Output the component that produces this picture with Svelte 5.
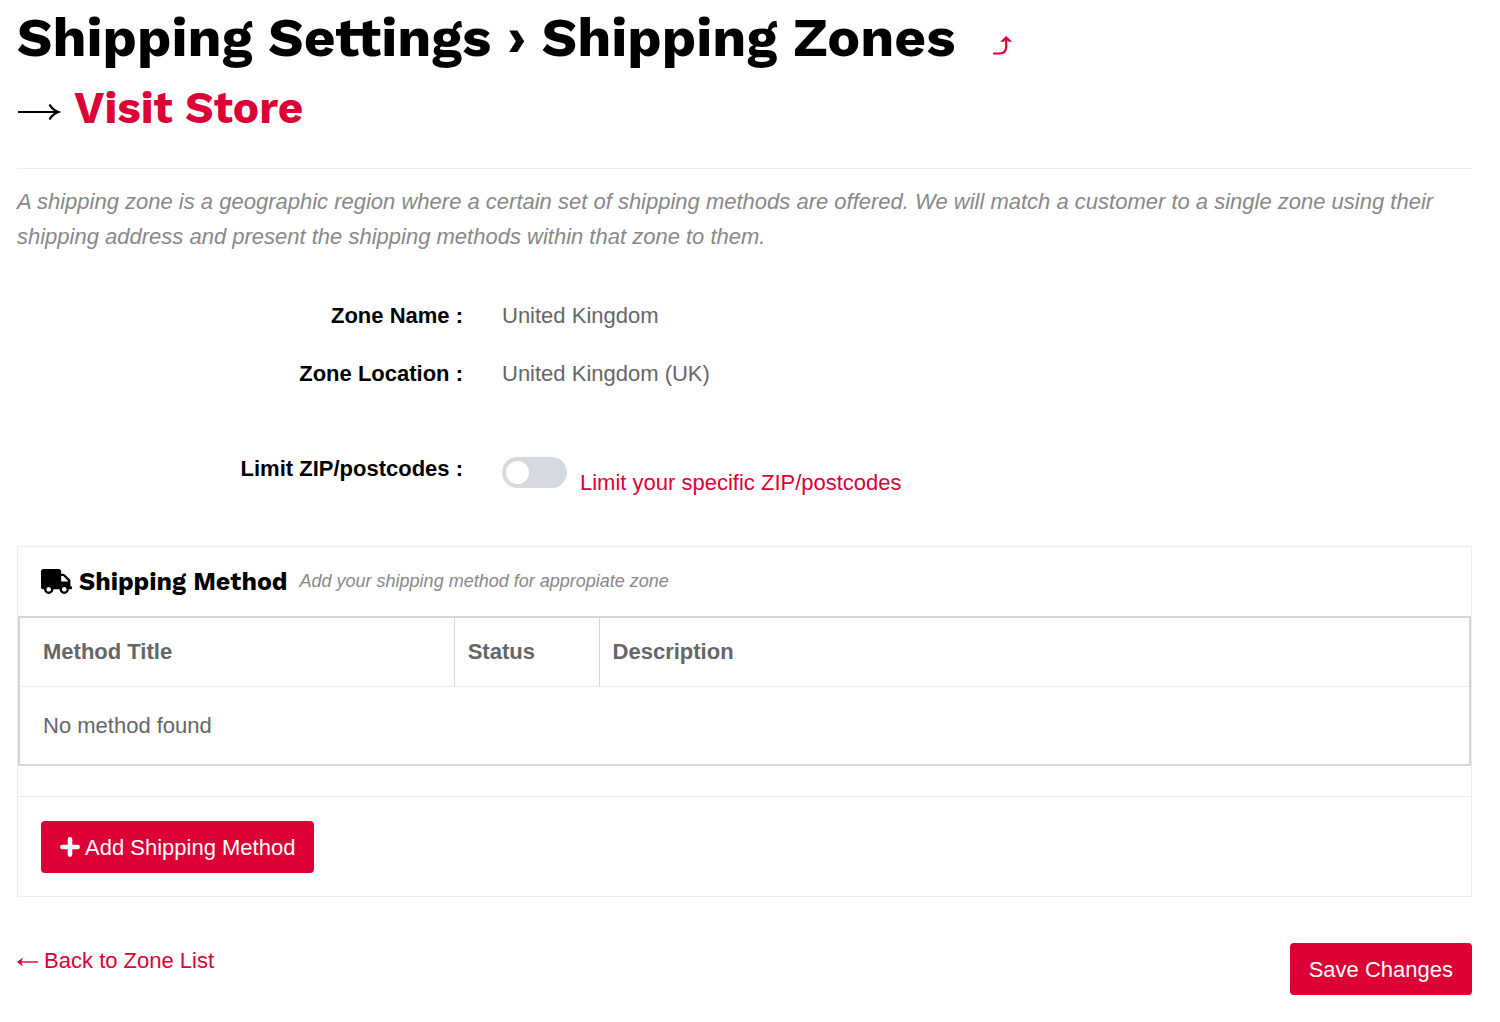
<script>
  let limitPostcodes = $state(false);

  const zone = {
    name: 'United Kingdom',
    location: 'United Kingdom (UK)'
  };

  let methods = $state([]);
</script>

<main class="shipping-zone">
  <header class="page-header">
    <h1>
      Shipping Settings › Shipping Zones
      <a href="#admin" class="admin-link" aria-label="Switch to admin view">
        <svg viewBox="0 0 20 20" aria-hidden="true">
          <path d="M1 17.500h5.500c4.500 0 6.700-2.500 6.700-7V3" fill="none" stroke="currentColor" stroke-width="2.200" stroke-linecap="round" />
          <path d="M13.200 0l6 5.800h-3.500l-2.500-2.300-2.500 2.300H7.200z" fill="currentColor" />
        </svg>
      </a>
    </h1>
    <h2>
      <svg class="visit-arrow" viewBox="0 0 46 22" aria-hidden="true">
        <path d="M1 11h40M32.500 3.500q2.500 5 9 7.500q-6.500 2.500-9 7.500" fill="none" stroke="currentColor" stroke-width="2.200" />
      </svg>
      <a href="#store">Visit Store</a>
    </h2>
  </header>

  <p class="intro">
    A shipping zone is a geographic region where a certain set of shipping methods are offered. We will match a customer to a single zone using their shipping address and present the shipping methods within that zone to them.
  </p>

  <form onsubmit={(e) => e.preventDefault()}>
    <dl class="zone-details">
      <dt>Zone Name :</dt>
      <dd>{zone.name}</dd>
      <dt>Zone Location :</dt>
      <dd>{zone.location}</dd>
    </dl>

    <div class="limit-row">
      <label for="limit-postcodes" class="limit-label">Limit ZIP/postcodes :</label>
      <div class="limit-control">
        <input id="limit-postcodes" type="checkbox" class="switch" bind:checked={limitPostcodes} />
        <label for="limit-postcodes" class="limit-hint">Limit your specific ZIP/postcodes</label>
      </div>
    </div>

    <section class="methods">
      <div class="methods-header">
        <svg class="truck" viewBox="0 0 640 512" aria-hidden="true">
          <path fill="currentColor" d="M624 352h-16V243.900c0-12.700-5.100-24.900-14.100-33.900L494 110.100c-9-9-21.200-14.100-33.900-14.100H416V48c0-26.500-21.500-48-48-48H48C21.500 0 0 21.500 0 48v320c0 26.500 21.500 48 48 48h16c0 53 43 96 96 96s96-43 96-96h128c0 53 43 96 96 96s96-43 96-96h48c8.800 0 16-7.200 16-16v-32c0-8.800-7.200-16-16-16zM160 464c-26.500 0-48-21.500-48-48s21.500-48 48-48 48 21.500 48 48-21.500 48-48 48zm320 0c-26.500 0-48-21.500-48-48s21.500-48 48-48 48 21.500 48 48-21.500 48-48 48zm80-208H416V144h44.100l99.900 99.900V256z" />
        </svg>
        <h3>Shipping Method</h3>
        <span class="methods-hint">Add your shipping method for appropiate zone</span>
      </div>

      <table>
        <thead>
          <tr>
            <th class="col-title">Method Title</th>
            <th class="col-status">Status</th>
            <th>Description</th>
          </tr>
        </thead>
        <tbody>
          {#each methods as method}
            <tr>
              <td>{method.title}</td>
              <td>{method.status}</td>
              <td>{method.description}</td>
            </tr>
          {:else}
            <tr>
              <td colspan="3">No method found</td>
            </tr>
          {/each}
        </tbody>
      </table>

      <div class="methods-footer">
        <button type="button" class="btn">
          <svg class="plus" viewBox="0 0 20 20" aria-hidden="true">
            <path d="M10 2.400v15.200M2.400 10h15.200" stroke="currentColor" stroke-width="4.600" stroke-linecap="round" />
          </svg>
          Add Shipping Method
        </button>
      </div>
    </section>

    <div class="form-actions">
      <a href="#zones">
        <svg class="back-arrow" viewBox="0 0 21 14" aria-hidden="true">
          <path d="M2 8h19" stroke="currentColor" stroke-width="1.400" />
          <path d="M0 8l6-4.500L4.200 8 6 12.500z" fill="currentColor" />
        </svg>
        Back to Zone List
      </a>
      <button type="submit" class="btn">Save Changes</button>
    </div>
  </form>
</main>

<style>
  :global(body) {
    margin: 0;
    background: #fff;
  }

  .shipping-zone {
    padding: 7px 28px 26px 17px;
    font-family: "Liberation Sans", Arial, sans-serif;
    font-size: 22px;
    line-height: 35px;
    color: #666;
  }

  a {
    color: #dd0036;
    text-decoration: none;
  }

  h1, h2, h3 {
    margin: 0;
    font-family: "Work Sans", Inter, sans-serif;
    font-weight: 700;
    color: #000;
  }

  .page-header {
    padding-bottom: 31px;
    border-bottom: 1px solid #ededed;
  }

  h1 {
    font-size: 55px;
    line-height: 60px;
  }

  .admin-link {
    display: inline-block;
    margin-left: 22px;
  }

  .admin-link svg {
    display: block;
    width: 20px;
    height: 20px;
  }

  h2 {
    margin-top: 13px;
    font-size: 44px;
    line-height: 57px;
  }

  .visit-arrow {
    width: 46px;
    height: 22px;
  }

  .back-arrow {
    width: 21px;
    height: 14px;
  }

  .intro {
    margin: 15px 0 44px;
    font-style: italic;
    color: #888;
  }

  .zone-details {
    display: grid;
    grid-template-columns: 446px 1fr;
    column-gap: 39px;
    row-gap: 23px;
    margin: 0 0 60px;
  }

  dt, .limit-label {
    text-align: right;
    font-weight: 700;
    color: #000;
  }

  dd {
    margin: 0;
  }

  .limit-row {
    display: grid;
    grid-template-columns: 446px 1fr;
    column-gap: 39px;
    margin-bottom: 46px;
  }

  .limit-control {
    display: flex;
    align-items: flex-start;
    gap: 13px;
    padding-top: 6px;
  }

  .switch {
    appearance: none;
    box-sizing: border-box;
    display: flex;
    flex: none;
    width: 65px;
    height: 31px;
    margin: 0;
    padding: 4px;
    border-radius: 16px;
    background: #d5dae0;
    cursor: pointer;
  }

  .switch::before {
    content: "";
    width: 23px;
    height: 23px;
    border-radius: 50%;
    background: #fff;
  }

  .switch:checked {
    justify-content: flex-end;
    background: #dd0036;
  }

  .limit-hint {
    padding-top: 8px;
    color: #dd0036;
  }

  .methods {
    border: 1px solid #ededed;
  }

  .methods-header {
    display: flex;
    align-items: center;
    padding: 17px 23px;
  }

  .truck {
    width: 31px;
    height: 25px;
    margin-right: 7px;
    color: #000;
  }

  h3 {
    font-size: 25px;
    line-height: 35px;
  }

  .methods-hint {
    margin-left: 12px;
    font-size: 18px;
    font-style: italic;
    color: #888;
  }

  table {
    width: 100%;
    border: 2px solid #d6d6d6;
    border-spacing: 0;
    table-layout: fixed;
    margin-bottom: 30px;
  }

  th {
    padding: 16px 13px 17px;
    border-bottom: 1px solid #ededed;
    border-right: 1px solid #d6d6d6;
    text-align: left;
    font-weight: 700;
  }

  th:last-child {
    border-right: 0;
  }

  th:first-child, td:first-child {
    padding-left: 23px;
  }

  .col-title {
    width: 30%;
    box-sizing: border-box;
  }

  .col-status {
    width: 10%;
    box-sizing: border-box;
  }

  td {
    padding: 21px 13px;
  }

  .methods-footer {
    padding: 24px 23px 23px;
    border-top: 1px solid #ededed;
  }

  .btn {
    display: inline-flex;
    align-items: center;
    gap: 5px;
    height: 52px;
    padding: 0 19px;
    border: 0;
    border-radius: 4px;
    background: #dd0036;
    color: #fff;
    font: inherit;
    cursor: pointer;
  }

  .plus {
    width: 20px;
    height: 20px;
  }

  .form-actions {
    display: flex;
    justify-content: space-between;
    align-items: flex-start;
    margin-top: 46px;
  }
</style>
